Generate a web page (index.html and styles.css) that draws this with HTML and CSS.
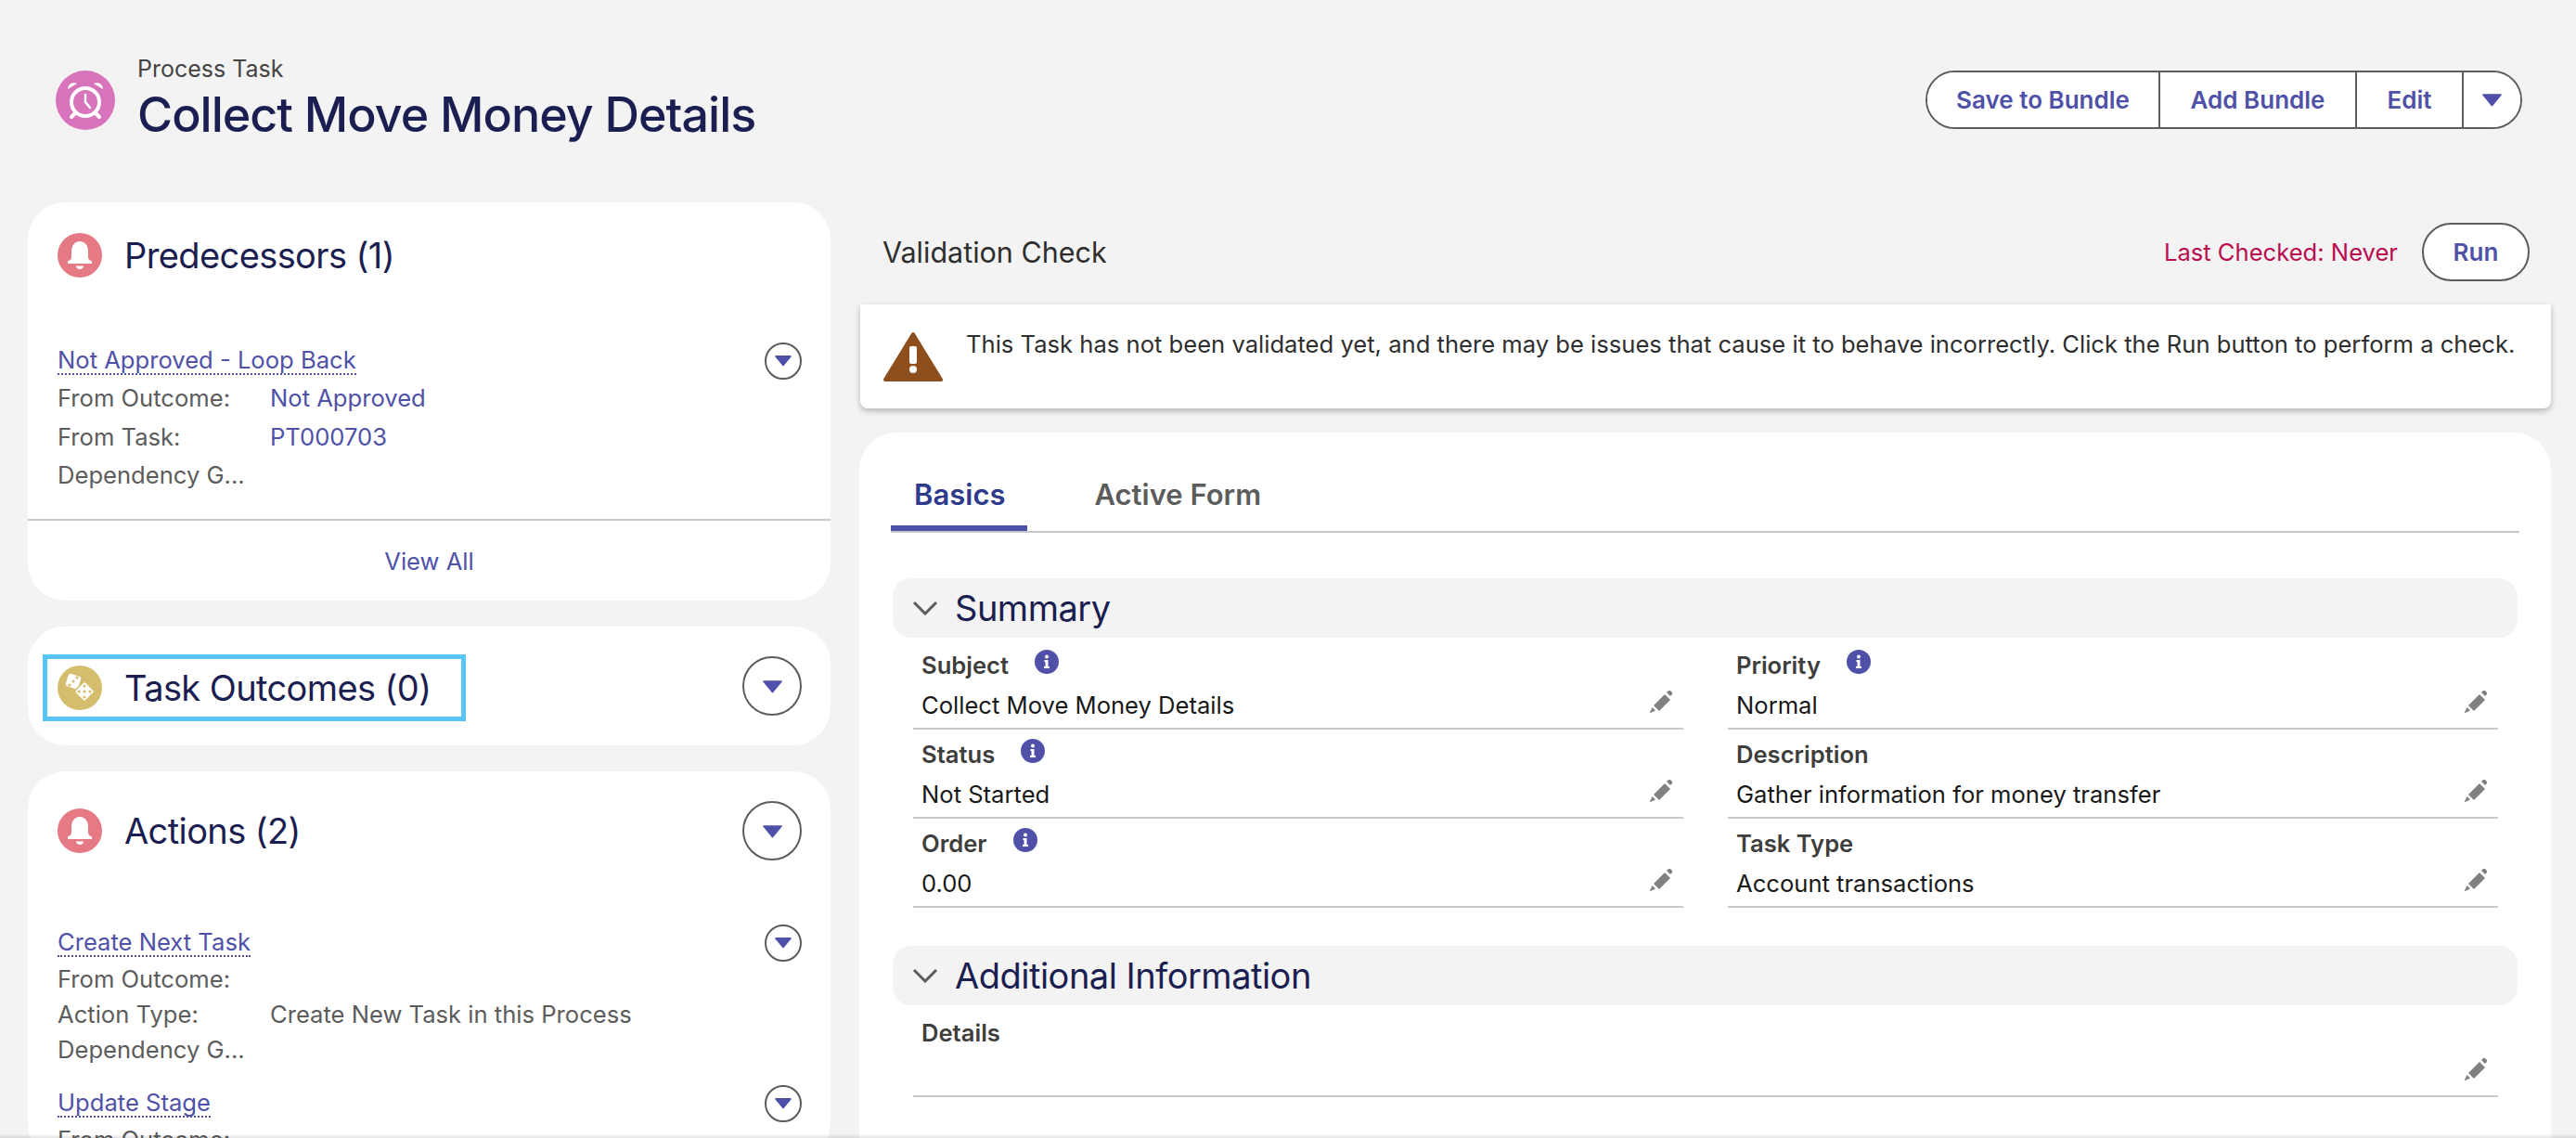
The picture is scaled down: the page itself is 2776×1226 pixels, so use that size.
FILE: index.html
```html
<!DOCTYPE html>
<html lang="en">
  <head>
    <meta charset="UTF-8" />
    <meta name="viewport" content="width=device-width, initial-scale=1.0" />
    <title>Collect Move Money Details</title>
    <link rel="stylesheet" href="styles.css">
  </head>
  <body>
    <svg class="icon-defs" aria-hidden="true">
      <symbol id="caret" viewBox="0 0 20 14">
        <path d="M1 1h18a.8.8 0 0 1 .7 1.2l-9 11a.9.9 0 0 1-1.4 0l-9-11A.8.8 0 0 1 1 1z" />
      </symbol>
      <symbol id="bell" viewBox="0 0 48 48">
        <circle cx="24" cy="24" r="24" fill="#e57a85" />
        <path fill="#fff" d="M24 9c-6 0-9 5-9 11v6c0 2-1 3-4 4.500v2.500h26v-2.500c-3-1.500-4-2.500-4-4.500v-6c0-6-3-11-9-11z" />
        <path fill="#fff" d="M20 35.500h8c0 2-2 3.500-4 3.500s-4-1.500-4-3.500z" />
      </symbol>
      <symbol id="info" viewBox="0 0 26 26">
        <circle cx="13" cy="13" r="13" fill="#4f51a8" />
        <circle cx="13" cy="7.500" r="2" fill="#fff" />
        <path fill="#fff" d="M10.500 11h4v7h1.500v2h-6v-2h1.500v-5h-1z" />
      </symbol>
      <symbol id="pencil" viewBox="0 0 28 28">
        <path fill="#808080" d="M20 4l1.500-1.500a2 2 0 0 1 3 0l1 1a2 2 0 0 1 0 3L24 8z" />
        <path fill="#808080" d="M18 6l6 6-12 12-6-6z" />
        <path fill="#808080" d="M4.500 20l3.500 3.500-6.500 3z" />
      </symbol>
      <symbol id="chevron" viewBox="0 0 28 16">
        <path d="M2 2l12 12L26 2" fill="none" stroke="#5c5c5c" stroke-width="3" />
      </symbol>
    </svg>

    <header class="page-header">
      <div class="page-title">
        <svg class="task-icon" viewBox="0 0 64 64">
          <circle cx="32" cy="32" r="32" fill="#d774bb" />
          <circle cx="32" cy="34" r="15" fill="none" stroke="#fff" stroke-width="4" />
          <path fill="#fff" d="M13 20c0-5 5-8 10-6z" />
          <path fill="#fff" d="M51 20c0-5-5-8-10-6z" />
          <path d="M21 46l-4 4M43 46l4 4" stroke="#fff" stroke-width="4" stroke-linecap="round" />
          <path d="M32 26v8l5 6" fill="none" stroke="#fff" stroke-width="2.500" stroke-linecap="round" />
        </svg>
        <div>
          <p class="object-name">Process Task</p>
          <h1>Collect Move Money Details</h1>
        </div>
      </div>
      <div class="btn-group">
        <button class="btn-save">Save to Bundle</button>
        <button class="btn-add">Add Bundle</button>
        <button class="btn-edit">Edit</button>
        <button class="btn-more" aria-label="More actions">
          <svg class="caret caret-lg"><use href="#caret" /></svg>
        </button>
      </div>
    </header>

    <main class="layout">
      <div class="left-col">
        <section class="card">
          <div class="card-header">
            <svg class="card-icon"><use href="#bell" /></svg>
            <h2>Predecessors (1)</h2>
          </div>
          <div class="item">
            <div class="item-head">
              <a class="item-link" href="#">Not Approved - Loop Back</a>
              <button class="round-btn" aria-label="Show actions"><svg class="caret"><use href="#caret" /></svg></button>
            </div>
            <div class="row row-tall"><span class="row-label">From Outcome:</span><a class="row-link" href="#">Not Approved</a></div>
            <div class="row row-tall"><span class="row-label">From Task:</span><a class="row-link" href="#">PT000703</a></div>
            <div class="row"><span class="row-label">Dependency G...</span></div>
          </div>
          <div class="card-footer"><a href="#">View All</a></div>
        </section>

        <section class="card card-collapsed">
          <div class="focus-title">
            <svg class="card-icon" viewBox="0 0 48 48">
              <circle cx="24" cy="24" r="24" fill="#d4be6e" />
              <rect x="10" y="10" width="14" height="14" rx="2.500" fill="#fff" transform="rotate(18 17 17)" />
              <circle cx="13" cy="21" r="1.600" fill="#d4be6e" />
              <circle cx="17" cy="17" r="1.600" fill="#d4be6e" />
              <circle cx="21" cy="13" r="1.600" fill="#d4be6e" />
              <rect x="21" y="20" width="16" height="16" rx="2.500" fill="#fff" stroke="#d4be6e" stroke-width="1.500" transform="rotate(45 29 28)" />
              <circle cx="29" cy="22" r="1.600" fill="#d4be6e" />
              <circle cx="29" cy="28" r="1.600" fill="#d4be6e" />
              <circle cx="29" cy="34" r="1.600" fill="#d4be6e" />
              <circle cx="23" cy="28" r="1.600" fill="#d4be6e" />
              <circle cx="35" cy="28" r="1.600" fill="#d4be6e" />
            </svg>
            <h2>Task Outcomes (0)</h2>
          </div>
          <button class="round-btn round-btn-lg" aria-label="Show actions"><svg class="caret caret-lg"><use href="#caret" /></svg></button>
        </section>

        <section class="card card-actions">
          <div class="card-header">
            <svg class="card-icon"><use href="#bell" /></svg>
            <h2>Actions (2)</h2>
            <button class="round-btn round-btn-lg" aria-label="Show actions"><svg class="caret caret-lg"><use href="#caret" /></svg></button>
          </div>
          <div class="item">
            <div class="item-head">
              <a class="item-link" href="#">Create Next Task</a>
              <button class="round-btn" aria-label="Show actions"><svg class="caret"><use href="#caret" /></svg></button>
            </div>
            <div class="row"><span class="row-label">From Outcome:</span></div>
            <div class="row"><span class="row-label">Action Type:</span><span>Create New Task in this Process</span></div>
            <div class="row"><span class="row-label">Dependency G...</span></div>
          </div>
          <div class="item">
            <div class="item-head">
              <a class="item-link" href="#">Update Stage</a>
              <button class="round-btn" aria-label="Show actions"><svg class="caret"><use href="#caret" /></svg></button>
            </div>
            <div class="row"><span class="row-label">From Outcome:</span></div>
          </div>
        </section>
      </div>

      <div class="right-col">
        <div class="validation">
          <span class="validation-title">Validation Check</span>
          <span class="last-checked">Last Checked: Never</span>
          <button class="btn-run">Run</button>
        </div>
        <div class="alert">
          <svg class="alert-icon" viewBox="0 0 64 54">
            <path fill="#8c4f1d" stroke="#8c4f1d" stroke-width="4" stroke-linejoin="round" d="M32 3L62 52H2z" />
            <rect x="28" y="16" width="8" height="19" rx="2" fill="#fff" />
            <circle cx="32" cy="41" r="4" fill="#fff" />
          </svg>
          <p>This Task has not been validated yet, and there may be issues that cause it to behave incorrectly. Click the Run button to perform a check.</p>
        </div>

        <section class="detail-card">
          <div class="tabs">
            <a class="tab tab-active" href="#">Basics</a>
            <a class="tab" href="#">Active Form</a>
          </div>

          <div class="section-head">
            <svg class="chevron"><use href="#chevron" /></svg>
            <h3>Summary</h3>
          </div>
          <div class="fields">
            <div class="field">
              <div class="field-label">Subject <svg class="info"><use href="#info" /></svg></div>
              <div class="field-value">Collect Move Money Details <svg class="pencil"><use href="#pencil" /></svg></div>
            </div>
            <div class="field">
              <div class="field-label">Priority <svg class="info"><use href="#info" /></svg></div>
              <div class="field-value">Normal <svg class="pencil"><use href="#pencil" /></svg></div>
            </div>
            <div class="field">
              <div class="field-label">Status <svg class="info"><use href="#info" /></svg></div>
              <div class="field-value">Not Started <svg class="pencil"><use href="#pencil" /></svg></div>
            </div>
            <div class="field">
              <div class="field-label">Description</div>
              <div class="field-value">Gather information for money transfer <svg class="pencil"><use href="#pencil" /></svg></div>
            </div>
            <div class="field">
              <div class="field-label">Order <svg class="info"><use href="#info" /></svg></div>
              <div class="field-value">0.00 <svg class="pencil"><use href="#pencil" /></svg></div>
            </div>
            <div class="field">
              <div class="field-label">Task Type</div>
              <div class="field-value">Account transactions <svg class="pencil"><use href="#pencil" /></svg></div>
            </div>
          </div>

          <div class="section-head section-head-next">
            <svg class="chevron"><use href="#chevron" /></svg>
            <h3>Additional Information</h3>
          </div>
          <div class="fields">
            <div class="field field-wide">
              <div class="field-label">Details</div>
              <div class="field-value"><svg class="pencil"><use href="#pencil" /></svg></div>
            </div>
          </div>
        </section>
      </div>
    </main>

    <div class="bottom-edge"></div>
  </body>
</html>
```

FILE: styles.css
```css
* {
  margin: 0;
  padding: 0;
  box-sizing: border-box;
  font-family: Inter, "Noto Sans", sans-serif;
}

html,
body {
  height: 1226px;
  overflow: hidden;
}

body {
  background: #f3f3f3;
  color: #181818;
  font-size: 25.6px;
}

a {
  color: #4f51a8;
  text-decoration: none;
}

button {
  background: #ffffff;
  border: none;
  color: #4f51a8;
  cursor: pointer;
}

.icon-defs {
  display: none;
}

/* page header */
.page-header {
  height: 218px;
  padding: 58px 58px 0 60px;
  display: flex;
  justify-content: space-between;
  align-items: flex-start;
}

.page-title {
  display: flex;
  align-items: flex-start;
  gap: 24px;
}

.task-icon {
  width: 64px;
  height: 64px;
  margin-top: 18px;
}

.object-name {
  font-size: 25px;
  line-height: 32px;
  color: #444444;
}

h1 {
  margin-top: 3px;
  font-size: 52px;
  line-height: 62px;
  font-weight: 500;
  letter-spacing: -1px;
  color: #1b1e50;
}

.btn-group {
  display: flex;
  height: 63px;
  margin-top: 18px;
  background: #ffffff;
  border: 2px solid #5c5c5c;
  border-radius: 32px;
  overflow: hidden;
}

.btn-group button {
  font-size: 26px;
  font-weight: 600;
  border-right: 2px solid #5c5c5c;
}

.btn-save {
  width: 251px;
}

.btn-add {
  width: 212px;
}

.btn-edit {
  width: 115px;
}

.btn-group .btn-more {
  width: 61px;
  border-right: none;
}

.caret {
  display: block;
  width: 18px;
  height: 13px;
  margin: 0 auto;
  fill: #4f51a8;
}

.caret-lg {
  width: 21px;
  height: 15px;
}

/* columns */
.layout {
  display: grid;
  grid-template-columns: 865px 1823px;
  column-gap: 31px;
  margin-left: 30px;
}

.left-col {
  display: flex;
  flex-direction: column;
  gap: 28px;
}

.card {
  background: #ffffff;
  border-radius: 40px;
}

.card-header {
  display: flex;
  align-items: center;
  gap: 24px;
  height: 64px;
  margin: 25px 31px 61px 32px;
}

.card-header h2 {
  flex: 1;
}

.card-icon {
  width: 48px;
  height: 48px;
  flex-shrink: 0;
}

h2 {
  font-size: 38px;
  font-weight: 400;
  letter-spacing: -0.6px;
  color: #1b1e50;
}

.item {
  padding: 0 31px 0 32px;
  margin-bottom: 18px;
}

.item-head {
  display: flex;
  justify-content: space-between;
  align-items: center;
  height: 41px;
}

.item-link {
  border-bottom: 2px dotted #4f51a8;
  line-height: 29px;
}

.round-btn {
  width: 40px;
  height: 40px;
  border: 2px solid #5c5c5c;
  border-radius: 50%;
  flex-shrink: 0;
}

.round-btn-lg {
  width: 64px;
  height: 64px;
}

.row {
  display: flex;
  height: 38px;
  line-height: 38px;
  color: #5c5c5c;
}

.row-tall {
  height: 42px;
  line-height: 40px;
}

.row-label {
  width: 229px;
  white-space: nowrap;
}

.card-footer {
  border-top: 2px solid #c9c9c9;
  height: 88px;
  margin-top: 28px;
  text-align: center;
  line-height: 88px;
}

.card-collapsed {
  height: 128px;
  padding: 0 31px 0 16px;
  display: flex;
  justify-content: space-between;
  align-items: center;
}

.focus-title {
  display: flex;
  align-items: center;
  gap: 24px;
  width: 456px;
  height: 72px;
  margin-top: 4px;
  padding-left: 11px;
  border: 5px solid #58c4f7;
}

.card-actions {
  height: 420px;
}

.card-actions .card-header {
  margin: 32px 31px 68px 32px;
}

/* validation */
.validation {
  display: flex;
  align-items: center;
  height: 110px;
  padding: 0 23px 3px 25px;
}

.validation-title {
  flex: 1;
  font-size: 30.5px;
  color: #2e2e2e;
}

.last-checked {
  color: #ba0c4f;
  margin-right: 26px;
}

.btn-run {
  width: 116px;
  height: 63px;
  border: 2px solid #5c5c5c;
  border-radius: 32px;
  font-size: 26px;
  font-weight: 600;
}

.alert {
  display: flex;
  gap: 25px;
  height: 112px;
  margin-left: 1px;
  padding: 29px 25px 0;
  background: #ffffff;
  border-radius: 0 0 8px 8px;
  box-shadow: 0 3px 6px rgba(0, 0, 0, 0.25);
  color: #2e2e2e;
  line-height: 28px;
}

.alert-icon {
  width: 64px;
  height: 54px;
  flex-shrink: 0;
}

.alert p {
  white-space: nowrap;
}

/* detail card */
.detail-card {
  height: 800px;
  margin-top: 26px;
  padding: 27px 34px 0;
  background: #ffffff;
  border-radius: 40px;
}

.tabs {
  display: flex;
  height: 81px;
  border-bottom: 2px solid #c9c9c9;
}

.tab {
  height: 79px;
  padding: 0 25px 0 25px;
  margin-right: 47px;
  line-height: 79px;
  font-size: 31px;
  font-weight: 600;
  color: #5c5c5c;
}

.tab-active {
  padding-right: 24px;
  color: #2e3a8c;
  border-bottom: 6px solid #4f51a8;
}

.section-head {
  display: flex;
  align-items: center;
  height: 64px;
  margin: 49px 2px 0;
  padding-left: 21px;
  background: #f3f3f3;
  border-radius: 20px;
}

.section-head-next {
  margin-top: 41px;
}

.chevron {
  width: 28px;
  height: 16px;
  margin-right: 18px;
}

h3 {
  font-size: 38px;
  font-weight: 400;
  letter-spacing: -0.5px;
  color: #1b1e50;
}

.fields {
  display: grid;
  grid-template-columns: 830px 830px;
  column-gap: 48px;
  margin: 3px 0 0 24px;
}

.field {
  height: 96px;
  padding: 10px 10px 0 9px;
  border-bottom: 2px solid #c9c9c9;
}

.field-wide {
  grid-column: 1 / 3;
}

.field-label {
  display: flex;
  align-items: center;
  gap: 28px;
  height: 32px;
  font-weight: 600;
  color: #3e3e3c;
}

.info {
  width: 26px;
  height: 26px;
  margin-bottom: 6px;
}

.field-value {
  display: flex;
  justify-content: space-between;
  height: 32px;
  margin-top: 12px;
  line-height: 32px;
}

.pencil {
  width: 28px;
  height: 28px;
  margin: -2px 0 0 auto;
}

/* shadow along the bottom of the window */
.bottom-edge {
  position: fixed;
  left: 0;
  right: 0;
  bottom: 0;
  height: 4px;
  background: linear-gradient(rgba(0, 0, 0, 0), rgba(0, 0, 0, 0.12));
}
```
